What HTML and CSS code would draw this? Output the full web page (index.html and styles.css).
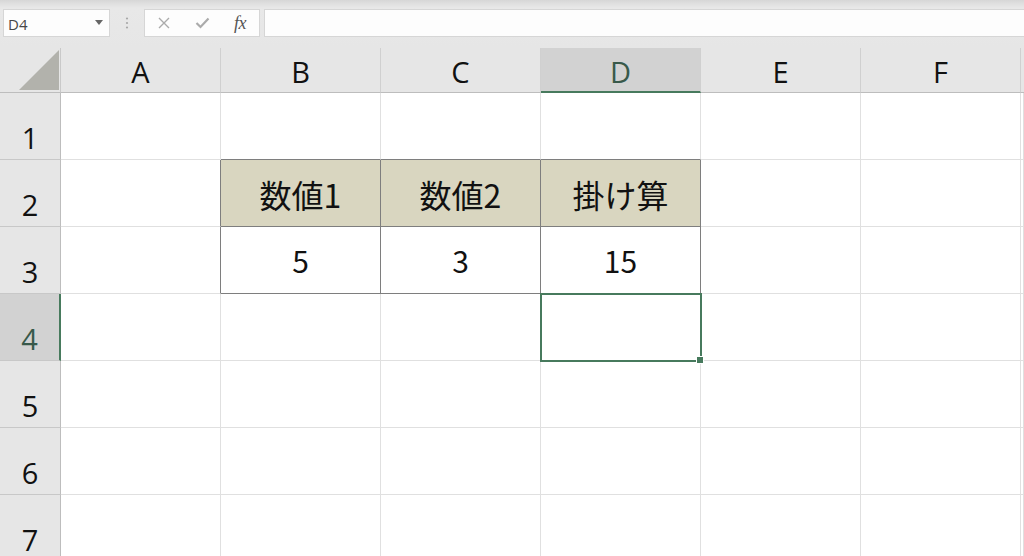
FILE: index.html
```html
<!DOCTYPE html>
<html lang="ja">
<head>
<meta charset="utf-8">
<title>Sheet</title>
<link rel="stylesheet" href="styles.css">
</head>
<body>
<div class="app">
  <div class="toolbar">
    <div class="namebox">
      <span class="nb-text">D4</span>
      <svg class="nb-arrow" width="8" height="5" viewBox="0 0 8 5"><polygon points="0,0 8,0 4,5" fill="#666"/></svg>
    </div>
    <div class="dots">
      <svg width="4" height="12" viewBox="0 0 4 12"><circle cx="2" cy="1.5" r="1.1" fill="#a8a8a8"/><circle cx="2" cy="6" r="1.1" fill="#a8a8a8"/><circle cx="2" cy="10.5" r="1.1" fill="#a8a8a8"/></svg>
    </div>
    <div class="fbtns">
      <span class="fb"><svg width="12" height="12" viewBox="0 0 12 12"><path d="M1 1 L11 11 M11 1 L1 11" stroke="#ababab" stroke-width="1.4" fill="none"/></svg></span>
      <span class="fb"><svg width="15" height="12" viewBox="0 0 15 12"><path d="M1.5 6 L5.5 10 L13.5 1.5" stroke="#ababab" stroke-width="2.2" fill="none"/></svg></span>
      <span class="fb fx">fx</span>
    </div>
    <div class="finput"></div>
  </div>

  <div class="sheet">
    <!-- header row -->
    <div class="corner"><svg width="60" height="44" viewBox="0 0 60 44"><polygon points="59,2 59,42 19,42" fill="#b2b2ac"/></svg></div>
    <div class="ch">A</div>
    <div class="ch">B</div>
    <div class="ch">C</div>
    <div class="ch sel">D</div>
    <div class="ch">E</div>
    <div class="ch">F</div>
    <div class="ch blank"></div>

    <!-- row 1 -->
    <div class="rh">1</div>
    <div class="c"></div>
    <div class="c bt"></div>
    <div class="c bt"></div>
    <div class="c bt"></div>
    <div class="c"></div>
    <div class="c"></div>
    <div class="c"></div>

    <!-- row 2 -->
    <div class="rh">2</div>
    <div class="c bl"></div>
    <div class="c th">数値1</div>
    <div class="c th">数値2</div>
    <div class="c th">掛け算</div>
    <div class="c"></div>
    <div class="c"></div>
    <div class="c"></div>

    <!-- row 3 -->
    <div class="rh">3</div>
    <div class="c bl"></div>
    <div class="c td">5</div>
    <div class="c td">3</div>
    <div class="c td">15</div>
    <div class="c"></div>
    <div class="c"></div>
    <div class="c"></div>

    <!-- row 4 -->
    <div class="rh sel">4</div>
    <div class="c"></div>
    <div class="c"></div>
    <div class="c"></div>
    <div class="c active"></div>
    <div class="c"></div>
    <div class="c"></div>
    <div class="c"></div>

    <!-- row 5 -->
    <div class="rh">5</div>
    <div class="c"></div>
    <div class="c"></div>
    <div class="c"></div>
    <div class="c"></div>
    <div class="c"></div>
    <div class="c"></div>
    <div class="c"></div>

    <!-- row 6 -->
    <div class="rh">6</div>
    <div class="c"></div>
    <div class="c"></div>
    <div class="c"></div>
    <div class="c"></div>
    <div class="c"></div>
    <div class="c"></div>
    <div class="c"></div>

    <!-- row 7 -->
    <div class="rh">7</div>
    <div class="c"></div>
    <div class="c"></div>
    <div class="c"></div>
    <div class="c"></div>
    <div class="c"></div>
    <div class="c"></div>
    <div class="c"></div>
  </div>
</div>
</body>
</html>
```

FILE: styles.css
```css
* { box-sizing: border-box; }

html, body {
  margin: 0;
  padding: 0;
  width: 1024px;
  height: 556px;
  overflow: hidden;
  background: #ffffff;
}

.app {
  width: 1024px;
  height: 556px;
  overflow: hidden;
  font-family: "Open Sans", "Liberation Sans", sans-serif;
}

/* ---------- toolbar ---------- */
.toolbar {
  height: 48px;
  display: flex;
  align-items: flex-start;
  padding-top: 9px;
  padding-left: 3px;
  background: linear-gradient(#d6d6d6 0px, #e0e0e0 4px, #e8e8e8 8px, #e6e6e6 48px);
}

.namebox {
  width: 107px;
  height: 28px;
  background: #fdfdfd;
  border: 1px solid #d6d6d6;
  display: flex;
  align-items: center;
  justify-content: space-between;
  padding: 0 6px 0 4px;
}

.nb-text {
  font-size: 15px;
  color: #474747;
  line-height: 1;
  margin-top: 2px;
}

.nb-arrow { margin-top: -1px; }

.dots {
  width: 34px;
  height: 28px;
  display: flex;
  align-items: center;
  justify-content: center;
}

.fbtns {
  width: 116px;
  height: 28px;
  background: #fdfdfd;
  border: 1px solid #d6d6d6;
  display: flex;
  align-items: center;
}

.fb {
  width: 38px;
  height: 26px;
  display: flex;
  align-items: center;
  justify-content: center;
}

.fx {
  font-family: "Liberation Serif", "DejaVu Serif", serif;
  font-style: italic;
  font-size: 18px;
  color: #555;
  letter-spacing: -0.5px;
}

.finput {
  flex: 1;
  height: 28px;
  margin-left: 4px;
  background: #fdfdfd;
  border: 1px solid #d6d6d6;
  border-right: none;
}

/* ---------- sheet ---------- */
.sheet {
  display: grid;
  grid-template-columns: 61px repeat(6, 160px) 1fr;
  grid-template-rows: 45px repeat(7, 67px);
}

.corner {
  background: #e6e6e6;
  border-right: 1px solid #c9c9c9;
  border-bottom: 1px solid #bdbdbd;
}

.corner svg { display: block; }

.ch {
  background: #e6e6e6;
  border-right: 1px solid #d0d0d0;
  border-bottom: 1px solid #bdbdbd;
  display: flex;
  align-items: center;
  justify-content: center;
  padding-top: 4px;
  font-size: 29px;
  line-height: 28px;
  color: #111;
}

.ch.sel {
  background: #d2d2d2;
  color: #38594a;
  border-bottom: 2px solid #477a5d;
}

.ch.blank { border-right: none; }

.rh {
  background: #e6e6e6;
  border-right: 1px solid #bdbdbd;
  border-bottom: 1px solid #c8c8c8;
  display: flex;
  align-items: flex-end;
  justify-content: center;
  padding-bottom: 7px;
  font-size: 29px;
  line-height: 28px;
  color: #111;
}

.rh.sel {
  background: #d2d2d2;
  color: #38594a;
  border-right: 2px solid #477a5d;
}

.c {
  background: #ffffff;
  border-right: 1px solid #e0e0e0;
  border-bottom: 1px solid #e0e0e0;
  display: flex;
  align-items: center;
  justify-content: center;
  font-family: "Noto Sans CJK JP", "Noto Sans", sans-serif;
  font-size: 30px;
  line-height: 30px;
  color: #111;
}

.c.th {
  background: #d9d6c0;
  border-right-color: #7e7e7e;
  border-bottom-color: #7e7e7e;
  font-size: 32px;
  padding-top: 2px;
}

.c.td {
  border-right-color: #7e7e7e;
  border-bottom-color: #7e7e7e;
}

.c.bl { border-right-color: #7e7e7e; }
.c.bt { border-bottom-color: #7e7e7e; }

.c.active { position: relative; }

.c.active::after {
  content: "";
  position: absolute;
  top: -1px;
  left: -1px;
  right: -2px;
  bottom: -2px;
  border: 2px solid #477a5d;
  z-index: 2;
}

.c.active::before {
  content: "";
  position: absolute;
  right: -4px;
  bottom: -4px;
  width: 6px;
  height: 6px;
  background: #477a5d;
  border: 1px solid #ffffff;
  z-index: 3;
}
```
